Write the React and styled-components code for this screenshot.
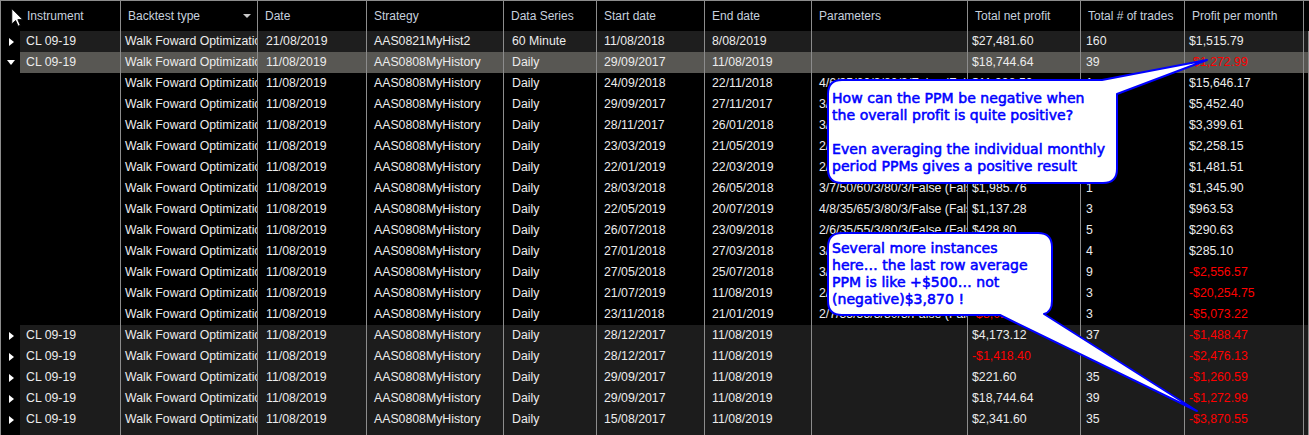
import React from 'react';
import styled, { createGlobalStyle } from 'styled-components';

const GlobalStyle = createGlobalStyle`
    html, body {
        margin: 0;
        padding: 0;
        background: #000;
    }
    body {
        font-family: "Liberation Sans", Arial, sans-serif;
        font-size: 12px;
    }
`;

const cols = [120, 137, 109, 137, 93, 108, 107, 156, 113, 104, 119];
const template = cols.map((c) => c + 'px').join(' ') + ' 1fr';

const headers = [
    'Instrument',
    'Backtest type',
    'Date',
    'Strategy',
    'Data Series',
    'Start date',
    'End date',
    'Parameters',
    'Total net profit',
    'Total # of trades',
    'Profit per month',
];

const WFO = 'Walk Foward Optimization';
const HIST = 'AAS0808MyHistory';

// kind: top rows have an expander, child rows don't
const rows = [
    { kind: 'top', bg: '#1e1e1e', cells: ['CL 09-19', WFO, '21/08/2019', 'AAS0821MyHist2', '60 Minute', '11/08/2018', '8/08/2019', '', '$27,481.60', '160', '$1,515.79'] },
    { kind: 'top', open: true, bg: '#585753', cells: ['CL 09-19', WFO, '11/08/2019', HIST, 'Daily', '29/09/2017', '11/08/2019', '', '$18,744.64', '39', '-$1,272.99'] },
    { kind: 'child', cells: ['', WFO, '11/08/2019', HIST, 'Daily', '24/09/2018', '22/11/2018', '4/6/35/60/3/80/3/False (False)', '$11,998.50', '1', '$15,646.17'] },
    { kind: 'child', cells: ['', WFO, '11/08/2019', HIST, 'Daily', '29/09/2017', '27/11/2017', '3/6/35/60/3/80/3/False (False)', '$9,012.33', '2', '$5,452.40'] },
    { kind: 'child', cells: ['', WFO, '11/08/2019', HIST, 'Daily', '28/11/2017', '26/01/2018', '3/7/35/60/3/80/3/False (False)', '$6,540.20', '2', '$3,399.61'] },
    { kind: 'child', cells: ['', WFO, '11/08/2019', HIST, 'Daily', '23/03/2019', '21/05/2019', '2/6/50/60/3/80/3/False (False)', '$4,301.10', '3', '$2,258.15'] },
    { kind: 'child', cells: ['', WFO, '11/08/2019', HIST, 'Daily', '22/01/2019', '22/03/2019', '2/8/35/65/3/80/3/False (False)', '$2,875.44', '2', '$1,481.51'] },
    { kind: 'child', cells: ['', WFO, '11/08/2019', HIST, 'Daily', '28/03/2018', '26/05/2018', '3/7/50/60/3/80/3/False (False)', '$1,985.76', '1', '$1,345.90'] },
    { kind: 'child', cells: ['', WFO, '11/08/2019', HIST, 'Daily', '22/05/2019', '20/07/2019', '4/8/35/65/3/80/3/False (False)', '$1,137.28', '3', '$963.53'] },
    { kind: 'child', cells: ['', WFO, '11/08/2019', HIST, 'Daily', '26/07/2018', '23/09/2018', '2/6/35/55/3/80/3/False (False)', '$428.80', '5', '$290.63'] },
    { kind: 'child', cells: ['', WFO, '11/08/2019', HIST, 'Daily', '27/01/2018', '27/03/2018', '3/6/50/55/3/80/3/False (False)', '$412.60', '4', '$285.10'] },
    { kind: 'child', cells: ['', WFO, '11/08/2019', HIST, 'Daily', '27/05/2018', '25/07/2018', '3/8/50/65/3/80/3/False (False)', '-$3,701.20', '9', '-$2,556.57'] },
    { kind: 'child', cells: ['', WFO, '11/08/2019', HIST, 'Daily', '21/07/2019', '11/08/2019', '2/6/50/65/3/80/3/False (False)', '-$2,947.90', '3', '-$20,254.75'] },
    { kind: 'child', cells: ['', WFO, '11/08/2019', HIST, 'Daily', '23/11/2018', '21/01/2019', '2/7/35/55/3/80/3/False (False)', '-$3,016.40', '3', '-$5,073.22'] },
    { kind: 'top', bg: '#1c1c1c', cells: ['CL 09-19', WFO, '11/08/2019', HIST, 'Daily', '28/12/2017', '11/08/2019', '', '$4,173.12', '37', '-$1,488.47'] },
    { kind: 'top', bg: '#1c1c1c', cells: ['CL 09-19', WFO, '11/08/2019', HIST, 'Daily', '28/12/2017', '11/08/2019', '', '-$1,418.40', '', '-$2,476.13'] },
    { kind: 'top', bg: '#1c1c1c', cells: ['CL 09-19', WFO, '11/08/2019', HIST, 'Daily', '29/09/2017', '11/08/2019', '', '$221.60', '35', '-$1,260.59'] },
    { kind: 'top', bg: '#1c1c1c', cells: ['CL 09-19', WFO, '11/08/2019', HIST, 'Daily', '29/09/2017', '11/08/2019', '', '$18,744.64', '39', '-$1,272.99'] },
    { kind: 'top', bg: '#1c1c1c', cells: ['CL 09-19', WFO, '11/08/2019', HIST, 'Daily', '15/08/2017', '11/08/2019', '', '$2,341.60', '35', '-$3,870.55'] },
    { kind: 'top', bg: '#1c1c1c', cells: ['', '', '', '', '', '', '', '', '', '', ''] },
];

// left padding per column, body cells
const pads = [0, 4, 8, 7, 8, 7, 7, 7, 4, 5, 4];

export default function App() {
    return (
        <>
            <GlobalStyle />
            <Grid>
                <HeaderRow>
                    {headers.map((h, i) => (
                        <HeadCell key={h} $first={i === 0}>
                            {i === 0 && <CursorIcon />}
                            <HeadLabel>{h}</HeadLabel>
                            {i === 1 && <SortArrow />}
                        </HeadCell>
                    ))}
                    <HeadCell />
                </HeaderRow>

                {rows.map((row, r) => (
                    <Row key={r} $bg={row.bg || '#000'}>
                        {row.cells.map((c, i) =>
                            i === 0 ? (
                                <InstrumentCell key={i}>
                                    <Expander>
                                        {row.kind === 'top' && c && (row.open ? <TriDown /> : <TriRight />)}
                                    </Expander>
                                    <InstrumentLabel $bg={row.kind === 'top' ? row.bg : '#000'}>{c}</InstrumentLabel>
                                </InstrumentCell>
                            ) : (
                                <Cell key={i} $pad={pads[i]} $neg={c.startsWith('-')}>
                                    {c}
                                </Cell>
                            )
                        )}
                        <Cell />
                    </Row>
                ))}

                <Overlay width="1309" height="435" viewBox="0 0 1309 435">
                    <path
                        d="M842,80 L1102,80 L1207,60 L1117,94 L1117,169 Q1117,183 1103,183 L842,183 Q828,183 828,169 L828,94 Q828,80 842,80 Z"
                        fill="#fff"
                        stroke="#0000ff"
                        strokeWidth="2"
                        strokeLinejoin="round"
                    />
                    <path
                        d="M842,233 L1038,233 Q1052,233 1052,247 L1052,301 Q1052,312 1044,314 L1197,411 L1000,315 L842,315 Q828,315 828,301 L828,247 Q828,233 842,233 Z"
                        fill="#fff"
                        stroke="#0000ff"
                        strokeWidth="2"
                        strokeLinejoin="round"
                    />
                </Overlay>

                <Note $x={832} $y={90}>
                    How can the PPM be negative when
                    <br />
                    the overall profit is quite positive?
                    <br />
                    <br />
                    Even averaging the individual monthly
                    <br />
                    period PPMs gives a positive result
                </Note>
                <Note $x={832} $y={240}>
                    Several more instances
                    <br />
                    here… the last row average
                    <br />
                    PPM is like +$500… not
                    <br />
                    (negative)$3,870 !
                </Note>
            </Grid>
        </>
    );
}

function CursorIcon() {
    return (
        <CursorSvg width="13" height="19" viewBox="0 0 12 18">
            <path d="M0.6,0.6 L0.6,15.2 L4.2,11.8 L6.6,17.2 L8.6,16.3 L6.3,11 L11,11 Z" fill="#fff" stroke="#000" strokeWidth="0.8" />
        </CursorSvg>
    );
}

const Grid = styled.div`
    position: relative;
    width: 1309px;
    height: 435px;
    overflow: hidden;
    background: #000;
    border-left: 1px solid #8c8c8c;
    box-sizing: border-box;
`;

const HeaderRow = styled.div`
    display: grid;
    grid-template-columns: ${template};
    height: 31px;
    border-top: 1px solid #8c8c8c;
    box-sizing: border-box;
    background: #000;
`;

const HeadCell = styled.div`
    display: flex;
    align-items: center;
    padding-left: ${(p) => (p.$first ? '10px' : '7px')};
    padding-right: 6px;
    border-right: 1px solid #8c8c8c;
    color: #c6d0de;
    white-space: nowrap;
    overflow: hidden;
`;

const HeadLabel = styled.span`
    flex: 1;
`;

const CursorSvg = styled.svg`
    flex: none;
    margin-right: 3px;
    margin-top: 2px;
`;

const SortArrow = styled.span`
    width: 0;
    height: 0;
    border-left: 4px solid transparent;
    border-right: 4px solid transparent;
    border-top: 4px solid #c8c8c8;
`;

const Row = styled.div`
    display: grid;
    grid-template-columns: ${template};
    height: 21px;
    line-height: 21px;
    background: ${(p) => p.$bg};
    color: #ececec;
    font-size: 12.3px;
`;

const Cell = styled.div`
    padding-left: ${(p) => p.$pad || 0}px;
    border-right: 1px solid #8c8c8c;
    white-space: nowrap;
    overflow: hidden;
    color: ${(p) => (p.$neg ? '#ff0000' : 'inherit')};
`;

const InstrumentCell = styled.div`
    display: flex;
    border-right: 1px solid #8c8c8c;
    overflow: hidden;
`;

const Expander = styled.div`
    width: 19px;
    flex: none;
    background: #000;
    display: flex;
    align-items: center;
    justify-content: center;
`;

const InstrumentLabel = styled.div`
    flex: 1;
    padding-left: 6px;
    background: ${(p) => p.$bg};
    white-space: nowrap;
`;

const TriRight = styled.span`
    width: 0;
    height: 0;
    border-top: 4.5px solid transparent;
    border-bottom: 4.5px solid transparent;
    border-left: 5px solid #fff;
    margin-left: 1px;
`;

const TriDown = styled.span`
    width: 0;
    height: 0;
    border-left: 4.5px solid transparent;
    border-right: 4.5px solid transparent;
    border-top: 5px solid #fff;
    margin-left: 1px;
`;

const Overlay = styled.svg`
    position: absolute;
    left: -1px;
    top: 0;
    pointer-events: none;
`;

const Note = styled.div`
    position: absolute;
    left: ${(p) => p.$x - 1}px;
    top: ${(p) => p.$y}px;
    font-family: "DejaVu Sans", Verdana, sans-serif;
    font-size: 14px;
    line-height: 17px;
    letter-spacing: 0.05px;
    color: #0000ff;
    -webkit-text-stroke: 0.55px #0000ff;
    white-space: nowrap;
`;
